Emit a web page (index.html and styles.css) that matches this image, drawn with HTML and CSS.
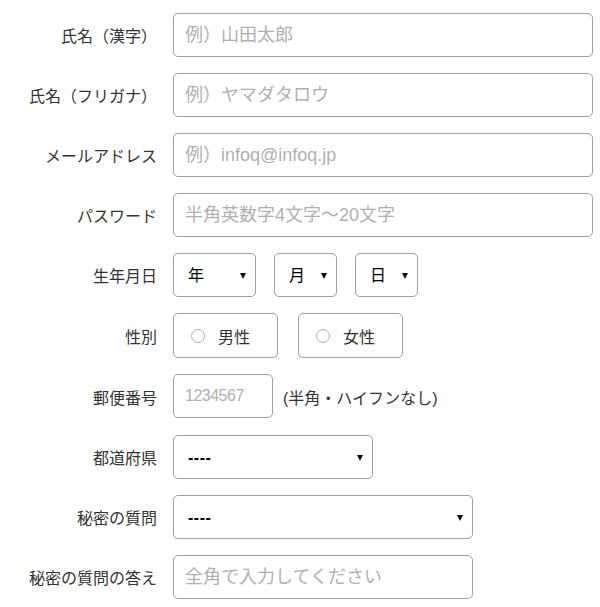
FILE: index.html
```html
<!DOCTYPE html>
<html lang="ja">
<head>
<meta charset="utf-8">
<title>会員登録</title>
<link rel="stylesheet" href="styles.css">
</head>
<body>
<form class="form">
  <label class="label">氏名（漢字）</label>
  <div class="field"><input class="input full" type="text" placeholder="例）山田太郎"></div>

  <label class="label">氏名（フリガナ）</label>
  <div class="field"><input class="input full" type="text" placeholder="例）ヤマダタロウ"></div>

  <label class="label">メールアドレス</label>
  <div class="field"><input class="input full" type="text" placeholder="例）infoq@infoq.jp"></div>

  <label class="label">パスワード</label>
  <div class="field"><input class="input full" type="password" placeholder="半角英数字4文字～20文字"></div>

  <label class="label">生年月日</label>
  <div class="field dates">
    <div class="select w-year"><select><option>年</option></select></div>
    <div class="select w-day"><select><option>月</option></select></div>
    <div class="select w-day"><select><option>日</option></select></div>
  </div>

  <label class="label tall">性別</label>
  <div class="field tall genders">
    <label class="radio"><input type="radio" name="sex"><span class="dot"></span><span>男性</span></label>
    <label class="radio"><input type="radio" name="sex"><span class="dot"></span><span>女性</span></label>
  </div>

  <label class="label tall">郵便番号</label>
  <div class="field tall postal">
    <input class="input w-postal" type="text" placeholder="1234567">
    <span class="note">(半角・ハイフンなし)</span>
  </div>

  <label class="label">都道府県</label>
  <div class="field"><div class="select w-pref"><select class="dash"><option>----</option></select></div></div>

  <label class="label">秘密の質問</label>
  <div class="field"><div class="select w-q"><select class="dash"><option>----</option></select></div></div>

  <label class="label">秘密の質問の答え</label>
  <div class="field"><input class="input w-q" type="text" placeholder="全角で入力してください"></div>
</form>
</body>
</html>
```

FILE: styles.css
```css
* { box-sizing: border-box; }

html, body {
  margin: 0;
  background: #fff;
}

body {
  font-family: "Liberation Sans", "Noto Sans CJK JP", sans-serif;
  font-size: 16px;
  color: #333;
  padding: 13px 7px 0 0;
}

.form {
  display: grid;
  grid-template-columns: 157px 1fr;
  column-gap: 16px;
  row-gap: 16px;
  margin: 0;
}

.label {
  display: flex;
  align-items: center;
  justify-content: flex-end;
  height: 44px;
  color: #333;
  white-space: nowrap;
}

.field {
  display: flex;
  align-items: flex-start;
  height: 44px;
}

.tall { height: 45px; }

.input {
  height: 44px;
  border: 1px solid #a0a0a0;
  border-radius: 5px;
  padding: 0 11px;
  font: inherit;
  font-size: 18px;
  color: #333;
  background: #fff;
  outline: none;
}

.input::placeholder {
  color: #b0b0b0;
  opacity: 1;
}

.full { width: 100%; }
.w-postal {
  width: 100px;
  font-size: 16px;
  letter-spacing: -0.5px;
}
.w-q { width: 300px; }

.dates { gap: 18px; }

.select {
  position: relative;
  height: 44px;
  border: 1px solid #a0a0a0;
  border-radius: 5px;
  background: #fff;
}

.select::after {
  content: "";
  position: absolute;
  right: 9px;
  top: 19px;
  border-left: 3.5px solid transparent;
  border-right: 3.5px solid transparent;
  border-top: 6px solid #111;
  pointer-events: none;
}

.select select {
  appearance: none;
  -webkit-appearance: none;
  width: 100%;
  height: 100%;
  border: 0;
  background: transparent;
  font: inherit;
  font-size: 16px;
  color: #000;
  padding: 0 20px 0 14px;
  outline: none;
}

.select select.dash {
  font-weight: bold;
  letter-spacing: 0.5px;
}

.w-year { width: 83px; }
.w-day { width: 63px; }
.w-pref { width: 200px; }

.genders { gap: 20px; }

.radio {
  display: flex;
  align-items: center;
  width: 105px;
  height: 45px;
  border: 1px solid #a0a0a0;
  border-radius: 5px;
  padding-left: 17px;
  color: #333;
}

.radio input {
  display: none;
}

.dot {
  width: 14px;
  height: 14px;
  border: 1px solid #b0b0b0;
  border-radius: 50%;
  margin-right: 13px;
  background: #fff;
}

.postal { gap: 10px; }

.note {
  align-self: center;
  color: #333;
  white-space: nowrap;
}
```
